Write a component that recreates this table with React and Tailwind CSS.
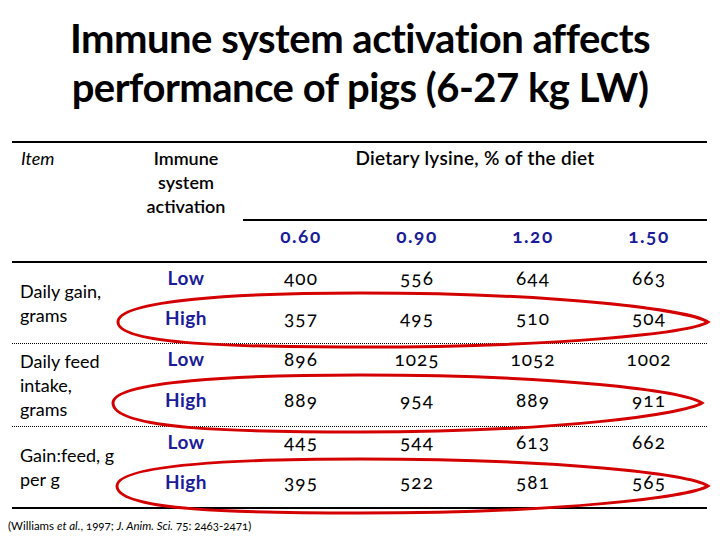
import React from "react";

const cols = ["0.60", "0.90", "1.20", "1.50"];
const groups = [
  { label: ["Daily gain,", "grams"], low: ["400", "556", "644", "663"], high: ["357", "495", "510", "504"], highH: "h-[50px]" },
  { label: ["Daily feed", "intake,", "grams"], low: ["896", "1025", "1052", "1002"], high: ["889", "954", "889", "911"], highH: "h-[52px]" },
  { label: ["Gain:feed, g", "per g"], low: ["445", "544", "613", "662"], high: ["395", "522", "581", "565"], highH: "h-[50px]" },
];

function loop(l, r, c, a, b) {
  const m = 360;
  return `M${l},${c} C${l},${c - 22} ${240},${c - a} ${m},${c - a} C${560},${c - a} ${r - 18},${c - 12} ${r},${c} C${r - 18},${c + 11} ${560},${c + b} ${m},${c + b} C${240},${c + b} ${l},${c + b - 2} ${l},${c} Z`;
}

export default function App() {
  return (
    <div className="relative w-[720px] h-[540px] bg-white overflow-hidden text-black [font-family:Lato,'Open_Sans',sans-serif]">
      <h1 className="pt-[14px] text-center font-bold text-[40px] leading-[49px] tracking-[-0.5px]">
        Immune system activation affects
        <br />
        performance of pigs (6-27 kg LW)
      </h1>

      <div className="mt-[29px] ml-[12px] w-[695px] border-t-2 border-black text-[18px]">
        <div className="grid grid-cols-[117px_114px_464px] border-b-2 border-black">
          <div className="pl-[9px] pt-[3px] leading-[24px] italic">Item</div>
          <div className="pt-[3px] leading-[24px] text-center font-semibold text-[18px]">
            Immune
            <br />
            system
            <br />
            activation
          </div>
          <div className="flex flex-col">
            <div className="h-[78px] pt-[3px] leading-[24px] text-center font-semibold text-[19px] tracking-[0.3px] border-b-2 border-black">
              Dietary lysine, % of the diet
            </div>
            <div className="grid grid-cols-4 h-[40px] pb-[10px] items-center">
              {cols.map((c) => (
                <div key={c} className="text-center font-bold text-[19px] tracking-[1.5px] text-[#1c1c9a] [font-variant-numeric:oldstyle-nums]">
                  {c}
                </div>
              ))}
            </div>
          </div>
        </div>

        {groups.map((g, gi) => (
          <div
            key={gi}
            className={`flex ${gi < 2 ? "border-b border-dotted border-black" : "border-b-2 border-black"}`}
          >
            <div className="w-[117px] pl-[8px] flex flex-col justify-center leading-[24px]">
              {g.label.map((t) => (
                <div key={t}>{t}</div>
              ))}
            </div>
            <div className="flex flex-col">
              <div className="h-[30px] grid grid-cols-[114px_repeat(4,116px)] items-center">
                <div className="text-center font-bold text-[19px] tracking-[0.5px] text-[#1c1c9a]">Low</div>
                {g.low.map((v, i) => (
                  <div key={i} className="text-center text-[19px] tracking-[1px] [font-variant-numeric:oldstyle-nums]">{v}</div>
                ))}
              </div>
              <div className={`${g.highH} grid grid-cols-[114px_repeat(4,116px)] items-center`}>
                <div className="text-center font-bold text-[19px] tracking-[0.5px] text-[#1c1c9a]">High</div>
                {g.high.map((v, i) => (
                  <div key={i} className="text-center text-[19px] tracking-[1px] [font-variant-numeric:oldstyle-nums]">{v}</div>
                ))}
              </div>
            </div>
          </div>
        ))}
      </div>

      <p className="mt-[10px] ml-[8px] text-[11.5px] leading-[14px] [font-variant-numeric:oldstyle-nums]">
        (Williams <i>et al.</i>, 1997; <i>J. Anim. Sci.</i> 75: 2463-2471)
      </p>

      <svg className="absolute inset-0 pointer-events-none" width="720" height="540" viewBox="0 0 720 540">
        <g fill="none" stroke="#d40000" strokeWidth="3">
          <path d={loop(118, 708, 322, 29, 25)} />
          <path d={loop(113, 702, 403, 28, 29)} />
          <path d={loop(117, 708, 486, 27, 27)} />
        </g>
      </svg>
    </div>
  );
}
